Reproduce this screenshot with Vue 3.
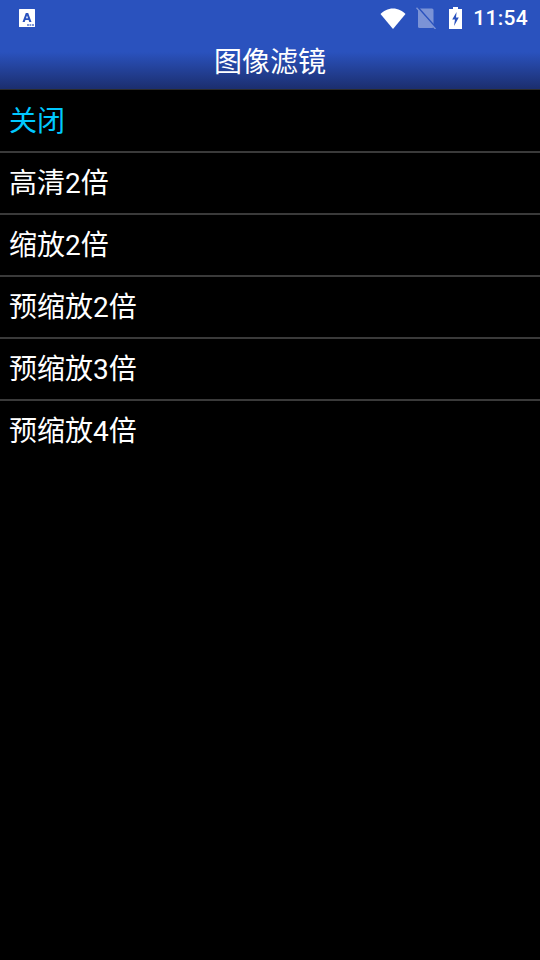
<script setup>
const items = ['关闭', '高清2倍', '缩放2倍', '预缩放2倍', '预缩放3倍', '预缩放4倍']
</script>

<template>
  <div class="screen">
    <header class="top">
      <div class="status">
        <svg class="notif" width="16" height="18" viewBox="0 0 16 18">
          <rect x="0" y="0" width="16" height="18" rx="0.5" fill="#fff" />
          <path d="M3.5 13 L6.8 4 H9.2 L12.5 13 H10.3 L9.6 11 H6.4 L5.7 13 Z M7 9.3 H9 L8 6.4 Z" fill="#2a52be" fill-rule="evenodd" />
          <rect x="8" y="15" width="2" height="2" fill="#7f97d8" />
          <rect x="10.5" y="15" width="1.5" height="2" fill="#7f97d8" />
          <rect x="12.7" y="15" width="2.3" height="2" fill="#7f97d8" />
        </svg>
        <div class="spacer"></div>
        <svg class="wifi" width="26" height="21" viewBox="0 0 26 21">
          <path d="M0.5 6 C3 3 8 0.5 13 0.5 C18 0.5 23 3 25.5 6 L13 21 Z" fill="#fff" />
        </svg>
        <svg class="sim" width="20" height="22" viewBox="0 0 20 22">
          <path d="M3.5 1.5 Q2 1.5 2 3 V19.5 Q2 21 3.5 21 H16 Q17.5 21 17.5 19.5 V3 Q17.5 1.5 16 1.5 Z" fill="#7b93d6" />
          <path d="M1.6 0.2 L19.6 20.6" stroke="#2a52be" stroke-width="2" />
          <path d="M0.5 0.8 L19.5 22" stroke="#7b93d6" stroke-width="1.4" />
        </svg>
        <svg class="batt" width="13" height="22" viewBox="0 0 13 22">
          <path d="M4 0 H9 V2 H13 V22 H0 V2 H4 Z" fill="#fff" />
          <path d="M7.6 5 L3.2 12.5 H6 L5 19 L9.8 10.5 H7 Z" fill="#2a52be" />
        </svg>
        <span class="time">11:54</span>
      </div>
      <div class="title">图像滤镜</div>
    </header>
    <ul class="list">
      <li v-for="(item, i) in items" :key="item" class="row" :class="{ active: i === 0 }">{{ item }}</li>
    </ul>
  </div>
</template>

<style scoped>
.screen {
  width: 540px;
  height: 960px;
  background: #000;
  overflow: hidden;
  font-family: Roboto, "Noto Sans CJK SC", sans-serif;
}
.top {
  height: 90px;
  box-sizing: border-box;
  background: linear-gradient(to bottom, #2a52be 0, #2a52be 52px, #1c2f70 88px, #1c2f70 89px);
  border-bottom: 1px solid #2b2b2b;
}
.status {
  height: 36px;
  display: flex;
  align-items: center;
  padding: 0 12px 0 19px;
}
.spacer { flex: 1; }
.wifi { margin-right: 10px; }
.sim { margin-right: 13px; }
.batt { margin-right: 11px; }
.time {
  color: #fff;
  font-size: 21px;
  font-weight: 500;
  letter-spacing: 0.3px;
}
.title {
  height: 53px;
  line-height: 53px;
  text-align: center;
  color: #fff;
  font-size: 28px;
}
.list {
  list-style: none;
  margin: 0;
  padding: 1px 0 0;
}
.row {
  height: 62px;
  box-sizing: border-box;
  line-height: 61px;
  padding-left: 9px;
  color: #fff;
  font-size: 28px;
  border-bottom: 2px solid #3a3a3a;
}
.row:last-child { border-bottom: none; }
.active { color: #00c8ff; }
</style>
